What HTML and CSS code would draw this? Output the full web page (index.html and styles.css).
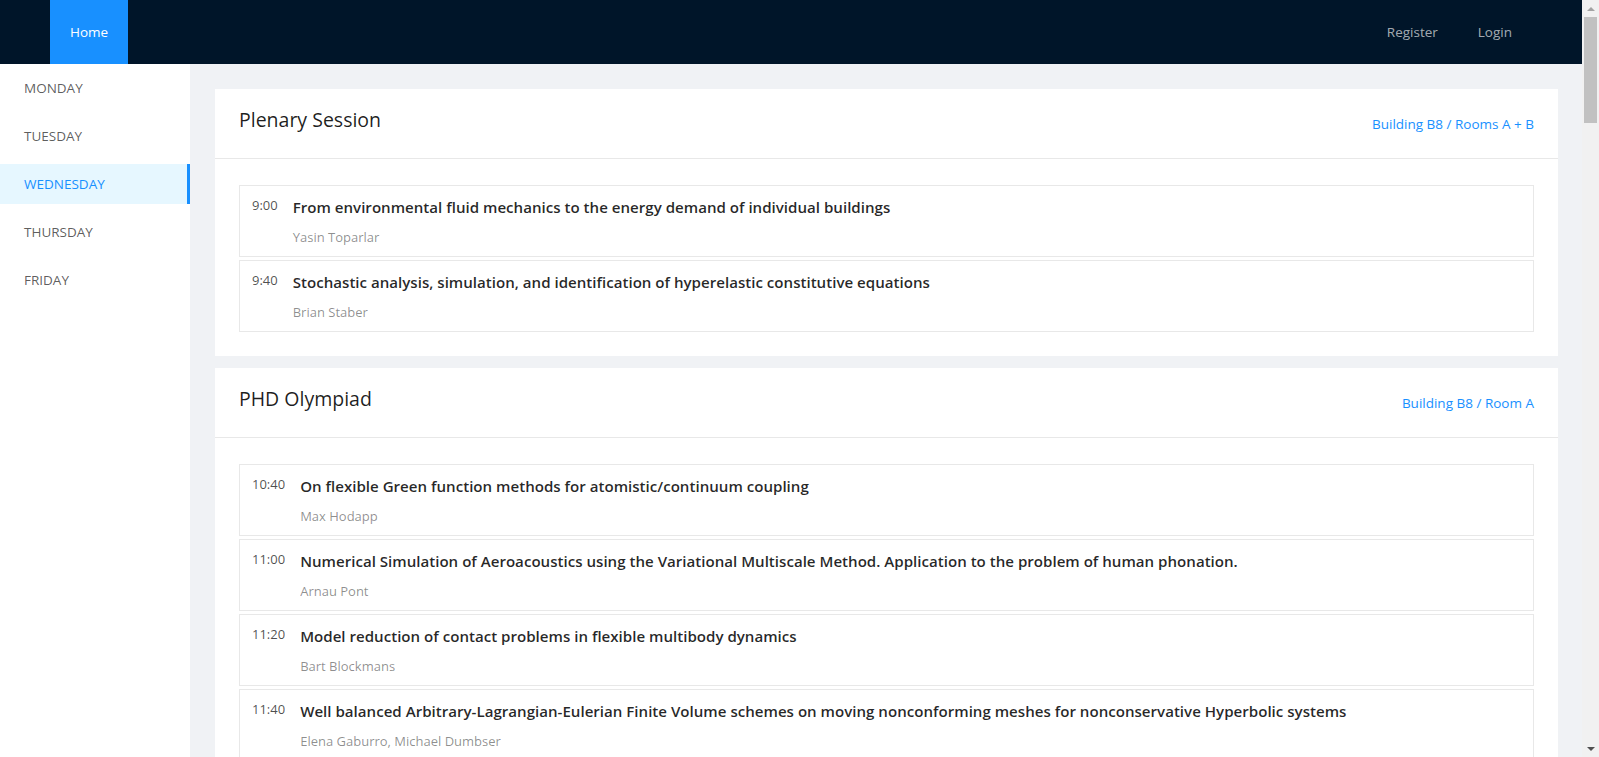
FILE: index.html
```html
<!DOCTYPE html>
<html lang="en">
<head>
<meta charset="utf-8">
<title>Program</title>
<link rel="stylesheet" href="styles.css">
</head>
<body>
<div class="app">
  <header class="topbar">
    <nav class="nav">
      <a class="nav-item active">Home</a>
    </nav>
    <nav class="nav nav-right">
      <a class="nav-item">Register</a>
      <a class="nav-item">Login</a>
    </nav>
  </header>
  <div class="main">
    <aside class="sidebar">
      <ul class="menu">
        <li class="menu-item">Monday</li>
        <li class="menu-item">Tuesday</li>
        <li class="menu-item selected">Wednesday</li>
        <li class="menu-item">Thursday</li>
        <li class="menu-item">Friday</li>
      </ul>
    </aside>
    <section class="content">
      <div class="card">
        <div class="card-head">
          <div class="card-title">Plenary Session</div>
          <div class="card-extra">Building B8 / Rooms A + B</div>
        </div>
        <div class="card-body">
          <div class="talk">
            <div class="talk-time">9:00</div>
            <div class="talk-info">
              <div class="talk-title">From environmental fluid mechanics to the energy demand of individual buildings</div>
              <div class="talk-author">Yasin Toparlar</div>
            </div>
          </div>
          <div class="talk">
            <div class="talk-time">9:40</div>
            <div class="talk-info">
              <div class="talk-title">Stochastic analysis, simulation, and identification of hyperelastic constitutive equations</div>
              <div class="talk-author">Brian Staber</div>
            </div>
          </div>
        </div>
      </div>
      <div class="card">
        <div class="card-head">
          <div class="card-title">PHD Olympiad</div>
          <div class="card-extra">Building B8 / Room A</div>
        </div>
        <div class="card-body">
          <div class="talk">
            <div class="talk-time">10:40</div>
            <div class="talk-info">
              <div class="talk-title">On flexible Green function methods for atomistic/continuum coupling</div>
              <div class="talk-author">Max Hodapp</div>
            </div>
          </div>
          <div class="talk">
            <div class="talk-time">11:00</div>
            <div class="talk-info">
              <div class="talk-title">Numerical Simulation of Aeroacoustics using the Variational Multiscale Method. Application to the problem of human phonation.</div>
              <div class="talk-author">Arnau Pont</div>
            </div>
          </div>
          <div class="talk">
            <div class="talk-time">11:20</div>
            <div class="talk-info">
              <div class="talk-title">Model reduction of contact problems in flexible multibody dynamics</div>
              <div class="talk-author">Bart Blockmans</div>
            </div>
          </div>
          <div class="talk">
            <div class="talk-time">11:40</div>
            <div class="talk-info">
              <div class="talk-title">Well balanced Arbitrary-Lagrangian-Eulerian Finite Volume schemes on moving nonconforming meshes for nonconservative Hyperbolic systems</div>
              <div class="talk-author">Elena Gaburro, Michael Dumbser</div>
            </div>
          </div>
        </div>
      </div>
    </section>
  </div>
</div>
<div class="scrollbar">
  <div class="sb-arrow sb-up"></div>
  <div class="sb-track"><div class="sb-thumb"></div></div>
  <div class="sb-arrow sb-down"></div>
</div>
</body>
</html>
```
FILE: styles.css
```css
html, body {
  margin: 0;
  padding: 0;
  height: 100%;
  overflow: hidden;
}
body {
  display: flex;
  font-family: "Open Sans", "Noto Sans", "Liberation Sans", sans-serif;
  font-size: 14px;
  color: rgba(0, 0, 0, 0.65);
}
.app {
  flex: 1;
  display: flex;
  flex-direction: column;
  min-width: 0;
  height: 100vh;
}
.topbar {
  height: 64px;
  flex: none;
  background: #001529;
  display: flex;
  justify-content: space-between;
  padding: 0 50px;
}
.nav {
  display: flex;
}
.nav-item {
  display: block;
  padding: 0 20px;
  line-height: 64px;
  color: rgba(255, 255, 255, 0.65);
  font-size: 13.5px;
  text-decoration: none;
}
.nav-item.active {
  background: #1890ff;
  color: #fff;
}
.main {
  flex: 1;
  display: flex;
  min-height: 0;
}
.sidebar {
  width: 190px;
  flex: none;
  background: #fff;
}
.menu {
  list-style: none;
  margin: 0;
  padding: 4px 0 0;
}
.menu-item {
  height: 40px;
  line-height: 40px;
  padding-left: 24px;
  margin-bottom: 8px;
  text-transform: uppercase;
  font-size: 13.5px;
  color: rgba(0, 0, 0, 0.65);
}
.menu-item.selected {
  background: #e6f7ff;
  color: #1890ff;
  border-right: 3px solid #1890ff;
}
.content {
  flex: 1;
  background: #f0f2f5;
  padding: 25px 24px 25px 25px;
  min-width: 0;
}
.card {
  background: #fff;
  margin-bottom: 12px;
}
.card-head {
  height: 70px;
  box-sizing: border-box;
  padding: 0 24px;
  display: flex;
  justify-content: space-between;
  align-items: center;
  border-bottom: 1px solid #e8e8e8;
}
.card-title {
  font-size: 19.5px;
  font-weight: 500;
  color: rgba(0, 0, 0, 0.88);
  padding-bottom: 8px;
}
.card-extra {
  color: #1890ff;
  font-size: 13.5px;
}
.card-body {
  padding: 26px 24px 24px;
  display: flex;
  flex-direction: column;
  gap: 3px;
}
.talk {
  border: 1px solid #e8e8e8;
  padding: 8px 12px;
  display: flex;
  align-items: flex-start;
}
.talk-time {
  font-size: 13px;
  line-height: 22px;
  color: rgba(0, 0, 0, 0.7);
  margin-right: 15px;
  white-space: nowrap;
}
.talk-title {
  font-size: 15.1px;
  font-weight: 600;
  line-height: 26px;
  color: rgba(0, 0, 0, 0.85);
  margin-bottom: 6px;
}
.talk-author {
  font-size: 13px;
  line-height: 22px;
  color: rgba(0, 0, 0, 0.45);
}
.scrollbar {
  width: 17px;
  flex: none;
  height: 100vh;
  background: #f1f1f1;
  display: flex;
  flex-direction: column;
}
.sb-arrow {
  height: 17px;
  flex: none;
  display: flex;
  align-items: center;
  justify-content: center;
}
.sb-arrow::before {
  content: "";
  width: 0;
  height: 0;
  border-left: 4px solid transparent;
  border-right: 4px solid transparent;
}
.sb-up::before {
  border-bottom: 4px solid #a3a3a3;
}
.sb-down::before {
  border-top: 4px solid #505050;
}
.sb-track {
  flex: 1;
  padding: 0 2px;
}
.sb-thumb {
  height: 106px;
  background: #c1c1c1;
}
```
